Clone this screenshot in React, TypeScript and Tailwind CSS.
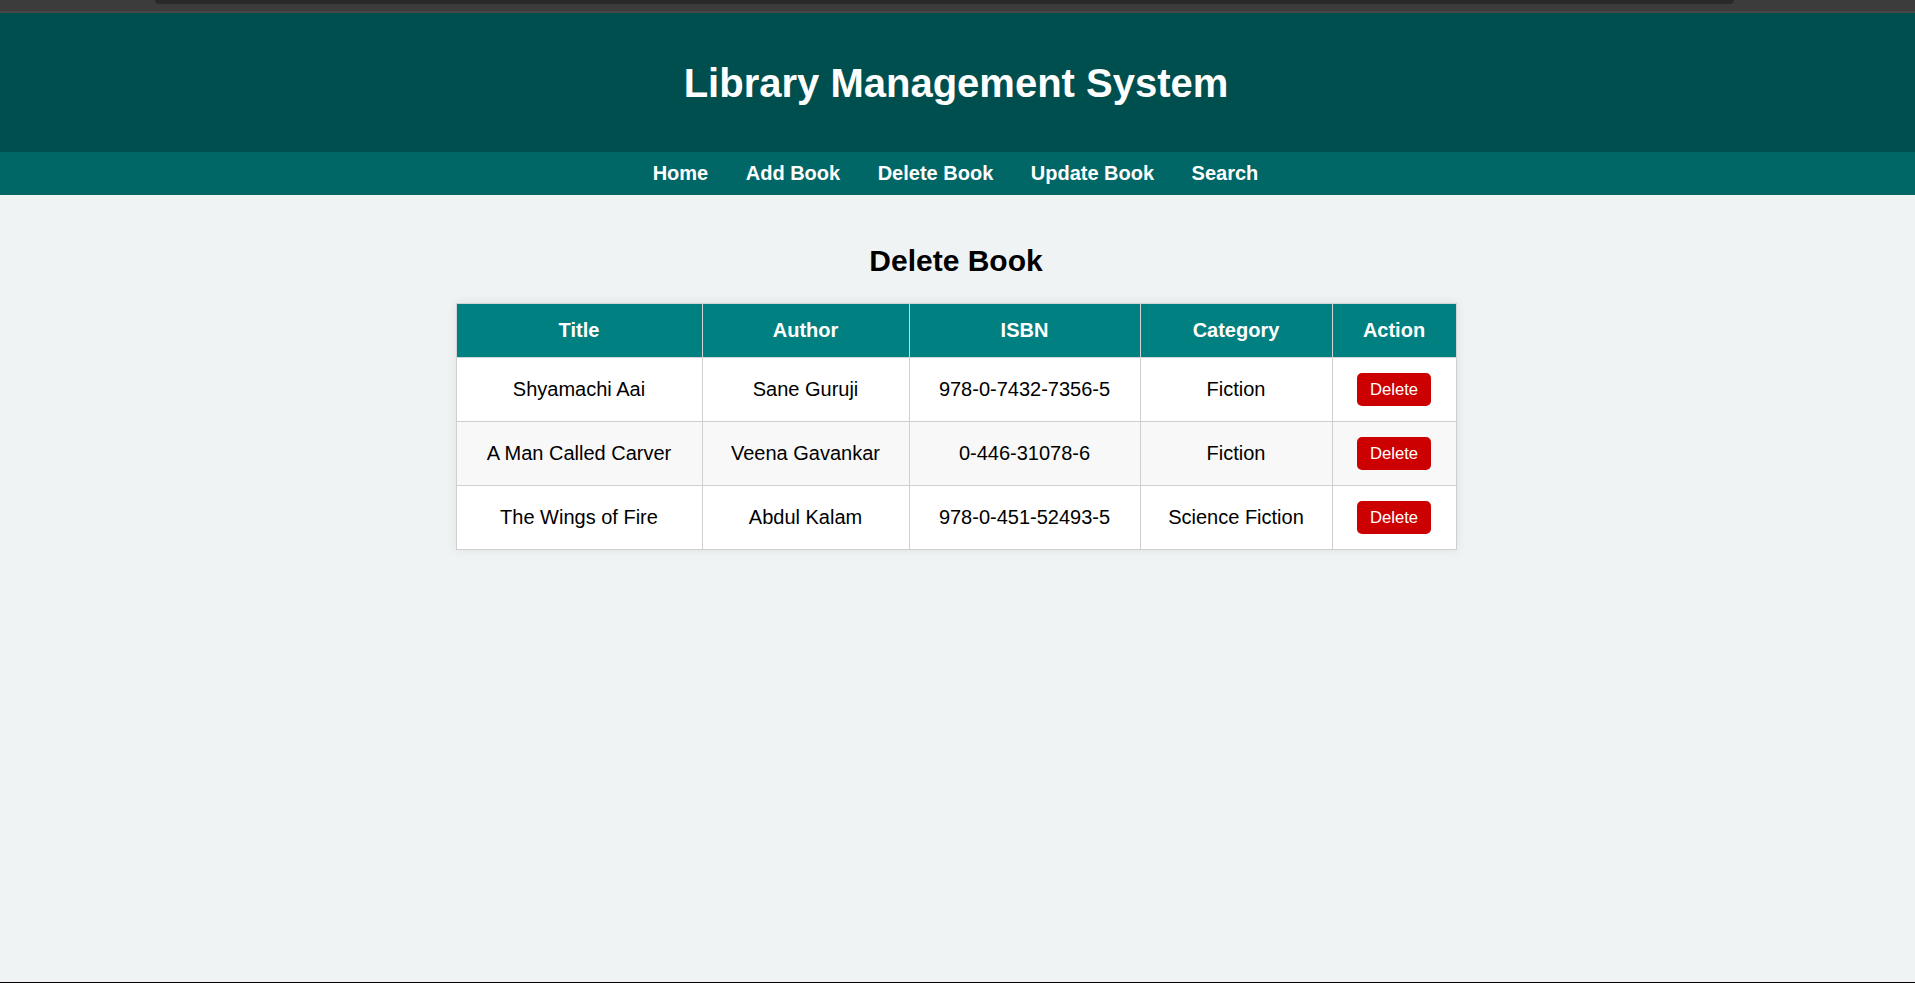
import React, { useState } from 'react';

interface Book {
  title: string;
  author: string;
  isbn: string;
  category: string;
}

const initialBooks: Book[] = [
  { title: 'Shyamachi Aai', author: 'Sane Guruji', isbn: '978-0-7432-7356-5', category: 'Fiction' },
  { title: 'A Man Called Carver', author: 'Veena Gavankar', isbn: '0-446-31078-6', category: 'Fiction' },
  { title: 'The Wings of Fire', author: 'Abdul Kalam', isbn: '978-0-451-52493-5', category: 'Science Fiction' },
];

const navLinks = ['Home', 'Add Book', 'Delete Book', 'Update Book', 'Search'];

export default function App() {
  const [books, setBooks] = useState<Book[]>(initialBooks);

  const handleDelete = (isbn: string) => {
    setBooks((prev) => prev.filter((b) => b.isbn !== isbn));
  };

  return (
    <div className="h-[983px] flex flex-col bg-[#eff3f3] font-['Liberation_Sans',Arial,sans-serif] text-black overflow-hidden">
      {/* browser strip at the very top */}
      <div className="h-[13px] bg-[#3c3c3c] border-b-2 border-[#474747] flex">
        <div className="ml-[155px] mr-[181px] flex-1 h-[4px] bg-[#292929] rounded-b-[8px]"></div>
      </div>

      <header className="h-[139px] pr-[3px] bg-[#004f4f] flex items-center justify-center">
        <h1 className="text-[40px] leading-[46px] font-bold text-white">Library Management System</h1>
      </header>

      <nav className="h-[43px] pr-[4px] bg-[#006666] flex items-center justify-center gap-[37.5px]">
        {navLinks.map((link) => (
          <a key={link} href="#" className="text-white text-[20px] leading-[23px] font-bold">
            {link}
          </a>
        ))}
      </nav>

      <main className="flex-1 pt-[49px] pr-[3px] flex flex-col items-center">
        <h2 className="text-[30px] leading-[34px] font-bold mb-[25px]">Delete Book</h2>
        <table className="w-[1000px] table-fixed border-collapse bg-white border border-[#cfcfcf] shadow-[0_0_10px_rgba(0,0,0,0.08)] text-[20px] leading-[23px]">
          <thead>
            <tr className="bg-[#008080] text-white">
              <th className="w-[246px] py-[15px] px-[15px] border border-[#d4d4d4] font-bold">Title</th>
              <th className="w-[207px] py-[15px] px-[15px] border border-[#d4d4d4] font-bold">Author</th>
              <th className="w-[231px] py-[15px] px-[15px] border border-[#d4d4d4] font-bold">ISBN</th>
              <th className="w-[192px] py-[15px] px-[15px] border border-[#d4d4d4] font-bold">Category</th>
              <th className="w-[124px] py-[15px] px-[15px] border border-[#d4d4d4] font-bold">Action</th>
            </tr>
          </thead>
          <tbody>
            {books.map((book, i) => (
              <tr key={book.isbn} className={i % 2 === 1 ? 'bg-[#f8f8f8]' : 'bg-white'}>
                <td className="h-[64px] px-[15px] border border-[#cfcfcf] text-center">{book.title}</td>
                <td className="px-[15px] border border-[#cfcfcf] text-center">{book.author}</td>
                <td className="px-[15px] border border-[#cfcfcf] text-center">{book.isbn}</td>
                <td className="px-[15px] border border-[#cfcfcf] text-center">{book.category}</td>
                <td className="px-[15px] border border-[#cfcfcf] text-center">
                  <button
                    onClick={() => handleDelete(book.isbn)}
                    className="w-[74px] h-[33px] bg-[#cc0000] text-white text-[16.67px] leading-[19px] rounded-[5px]"
                  >
                    Delete
                  </button>
                </td>
              </tr>
            ))}
          </tbody>
        </table>
      </main>

      <div className="h-px bg-black"></div>
    </div>
  );
}
